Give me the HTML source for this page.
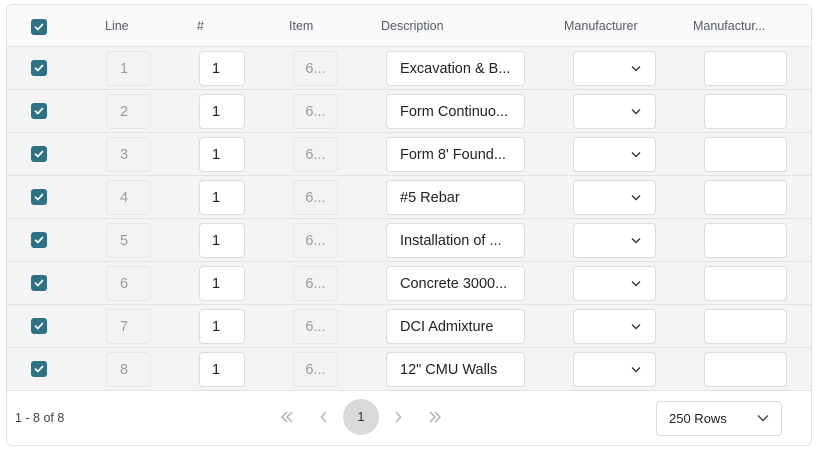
<!DOCTYPE html>
<html><head><style>
*{box-sizing:border-box;margin:0;padding:0}
body{width:819px;height:454px;background:#fff;font-family:"Liberation Sans",sans-serif;position:relative;overflow:hidden}
.wrap{position:absolute;left:6px;top:4px;width:806px;height:442px;border:1px solid #e2e2e2;border-radius:6px;overflow:hidden;background:#fff}
.hdr{position:absolute;left:0;top:0;width:100%;height:42px;background:#fafafa;border-bottom:1px solid #e2e2e2}
.t{position:absolute;font-size:12.5px;color:#555b66}
.row{position:absolute;left:0;width:100%;height:43px;background:#f4f4f4;border-bottom:1px solid #e2e2e2}
.cb{position:absolute;left:24px;width:16px;height:16px;border-radius:3px;background:#2f7184}
.cb svg{position:absolute;left:2px;top:2px}
.box{position:absolute;top:4px;height:35px;border-radius:4px;font-size:14.5px;line-height:34px}
.ro{border:1px solid #e6e6e6;background:#f3f3f3;color:#9a9a9a;text-align:center}
.ed{border:1px solid #dcdcdc;background:#fff;color:#222}
.chev{position:absolute;right:14px;top:13px}
.pg{position:absolute;top:406px}
</style></head><body>
<div class="wrap">
<div class="hdr">
<div class="cb" style="top:14px"><svg width="12" height="12" viewBox="0 0 12 12"><path d="M2.5 6.2l2.3 2.3 4.7-5" stroke="#fff" stroke-width="1.7" fill="none" stroke-linecap="round" stroke-linejoin="round"/></svg></div>
<div class="t" style="left:98px;top:14px">Line</div>
<div class="t" style="left:190px;top:14px">#</div>
<div class="t" style="left:282px;top:14px">Item</div>
<div class="t" style="left:374px;top:14px">Description</div>
<div class="t" style="left:557px;top:14px">Manufacturer</div>
<div class="t" style="left:686px;top:14px">Manufactur...</div>
</div>
<div id="rows"></div>
<div class="t" style="left:8px;top:406px;color:#444">1 - 8 of 8</div>
<svg class="pg" style="left:273px" width="14" height="12" viewBox="0 0 14 12"><path d="M7 1L2 6l5 5M12 1L7 6l5 5" stroke="#aaa" stroke-width="1.3" fill="none"/></svg>
<svg class="pg" style="left:313px" width="8" height="12" viewBox="0 0 8 12"><path d="M6 1L1.5 6 6 11" stroke="#aaa" stroke-width="1.3" fill="none"/></svg>
<div style="position:absolute;left:336px;top:394px;width:36px;height:36px;border-radius:50%;background:#d9d9d9;text-align:center;line-height:36px;font-size:13px;color:#333">1</div>
<svg class="pg" style="left:387px" width="8" height="12" viewBox="0 0 8 12"><path d="M2 1l4.5 5L2 11" stroke="#aaa" stroke-width="1.3" fill="none"/></svg>
<svg class="pg" style="left:421px" width="14" height="12" viewBox="0 0 14 12"><path d="M2 1l5 5-5 5M7 1l5 5-5 5" stroke="#aaa" stroke-width="1.3" fill="none"/></svg>
<div style="position:absolute;left:649px;top:396px;width:126px;height:35px;border:1px solid #dcdcdc;border-radius:4px;font-size:13px;color:#222;line-height:33px;padding-left:12px">250 Rows<svg style="position:absolute;right:12px;top:12px" width="12" height="8" viewBox="0 0 12 8"><path d="M1 1.5l5 5 5-5" stroke="#444" stroke-width="1.4" fill="none"/></svg></div>
</div>
<script>
var d=["Excavation &amp; B...","Form Continuo...","Form 8' Found...","#5 Rebar","Installation of ...","Concrete 3000...","DCI Admixture","12\" CMU Walls"],h="";
for(var i=0;i<8;i++){h+='<div class="row" style="top:'+(42+i*43)+'px"><div class="cb" style="top:13px"><svg width="12" height="12" viewBox="0 0 12 12"><path d="M2.5 6.2l2.3 2.3 4.7-5" stroke="#fff" stroke-width="1.7" fill="none" stroke-linecap="round" stroke-linejoin="round"/></svg></div>'+
'<div class="box ro" style="left:99px;width:45px;text-align:left;padding-left:13px">'+(i+1)+'</div>'+
'<div class="box ed" style="left:192px;width:46px;padding-left:12px">1</div>'+
'<div class="box ro" style="left:286px;width:45px">6...</div>'+
'<div class="box ed" style="left:379px;width:139px;padding-left:13px;white-space:nowrap;overflow:hidden">'+d[i]+'</div>'+
'<div class="box ed" style="left:566px;width:83px"><svg class="chev" width="10" height="7" viewBox="0 0 10 7"><path d="M1 1.5l4 4 4-4" stroke="#333" stroke-width="1.4" fill="none"/></svg></div>'+
'<div class="box ed" style="left:697px;width:83px"></div></div>';}
document.getElementById("rows").innerHTML=h;
</script>
</body></html>
